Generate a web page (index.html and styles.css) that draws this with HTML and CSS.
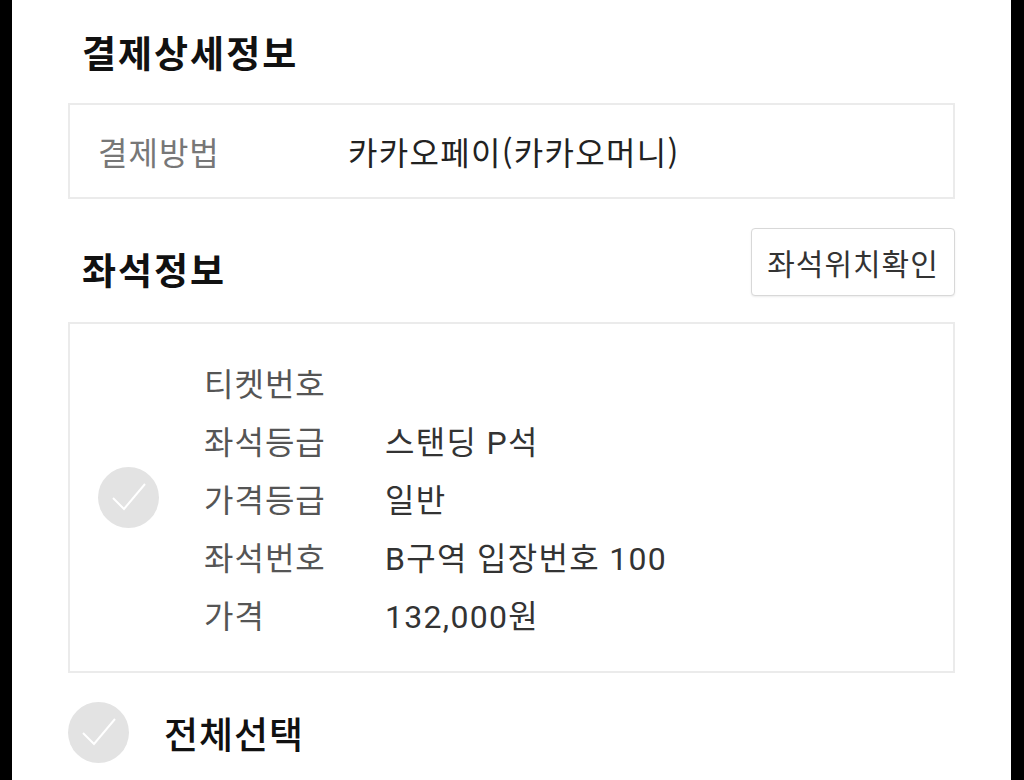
FILE: index.html
```html
<!DOCTYPE html>
<html lang="ko">
<head>
<meta charset="utf-8">
<link rel="stylesheet" href="styles.css">
</head>
<body>
<main class="page">
  <h2 class="title first">결제상세정보</h2>
  <div class="box pay">
    <span class="pay-label">결제방법</span>
    <span class="pay-value">카카오페이(카카오머니)</span>
  </div>
  <div class="seat-head">
    <h2 class="title">좌석정보</h2>
    <button class="btn">좌석위치확인</button>
  </div>
  <div class="box seat">
    <svg class="check" viewBox="0 0 61 61" width="61" height="61"><circle cx="30.5" cy="30.5" r="30.5" fill="#e3e3e3"/><polyline points="15,31 26,42 47,17" fill="none" stroke="#fff" stroke-width="2"/></svg>
    <dl class="info">
      <dt>티켓번호</dt><dd></dd>
      <dt>좌석등급</dt><dd>스탠딩 P석</dd>
      <dt>가격등급</dt><dd>일반</dd>
      <dt>좌석번호</dt><dd>B구역 입장번호 100</dd>
      <dt>가격</dt><dd>132,000원</dd>
    </dl>
  </div>
  <div class="all">
    <svg class="check" viewBox="0 0 61 61" width="61" height="61"><circle cx="30.5" cy="30.5" r="30.5" fill="#e3e3e3"/><polyline points="15,31 26,42 47,17" fill="none" stroke="#fff" stroke-width="2"/></svg>
    <span class="all-text">전체선택</span>
  </div>
</main>
</body>
</html>
```
FILE: styles.css
```css
html, body {
  margin: 0;
  padding: 0;
  background: #000;
  height: 100%;
}
body {
  display: flex;
  font-family: Roboto, "Noto Sans CJK KR", sans-serif;
}
.page {
  margin: 0 13px 0 12px;
  flex: 1;
  background: #fff;
  padding: 0 56px;
  min-height: 780px;
  box-sizing: border-box;
  overflow: hidden;
}
.title {
  margin: 0;
  font-family: "Noto Sans CJK KR", sans-serif;
  font-weight: 700;
  font-size: 37px;
  letter-spacing: 2px;
  color: #111;
  padding-left: 14px;
  line-height: 50px;
}
.title.first {
  padding-top: 27px;
  padding-bottom: 26px;
}
.box {
  border: 2px solid #ebebeb;
}
.pay {
  height: 92px;
  display: flex;
  align-items: center;
  font-size: 32px;
  letter-spacing: 1px;
  font-family: "Noto Sans CJK KR", sans-serif;
}
.pay-label {
  color: #777;
  padding-left: 28px;
  width: 250px;
}
.pay-value {
  color: #222;
  letter-spacing: 1.3px;
}
.seat-head {
  display: flex;
  justify-content: space-between;
  align-items: center;
  margin-top: 29px;
  height: 68px;
  margin-bottom: 26px;
}
.seat-head .title {
  padding-top: 14px;
}
.btn {
  height: 68px;
  width: 204px;
  background: #fff;
  border: 1px solid #d8d8d8;
  border-radius: 4px;
  box-shadow: 0 1px 2px rgba(0,0,0,0.08);
  font-family: "Noto Sans CJK KR", sans-serif;
  font-size: 30px;
  letter-spacing: 1px;
  color: #333;
  padding: 0;
}
.seat {
  height: 347px;
  display: flex;
  align-items: center;
  padding-left: 28px;
}
.check {
  flex: none;
  display: block;
}
.info {
  margin: 0 0 0 45px;
  display: grid;
  grid-template-columns: 181px auto;
  grid-auto-rows: 58px;
  font-size: 32px;
  letter-spacing: 1px;
  align-items: center;
}
.info dt {
  color: #555;
  font-family: "Noto Sans CJK KR", sans-serif;
}
.info dd {
  margin: 0;
  color: #333;
  letter-spacing: 1.3px;
}
.all {
  display: flex;
  align-items: center;
  margin-top: 29px;
}
.all-text {
  margin-left: 35px;
  font-family: "Noto Sans CJK KR", sans-serif;
  font-weight: 500;
  font-size: 37px;
  letter-spacing: 1px;
  color: #111;
}
```
